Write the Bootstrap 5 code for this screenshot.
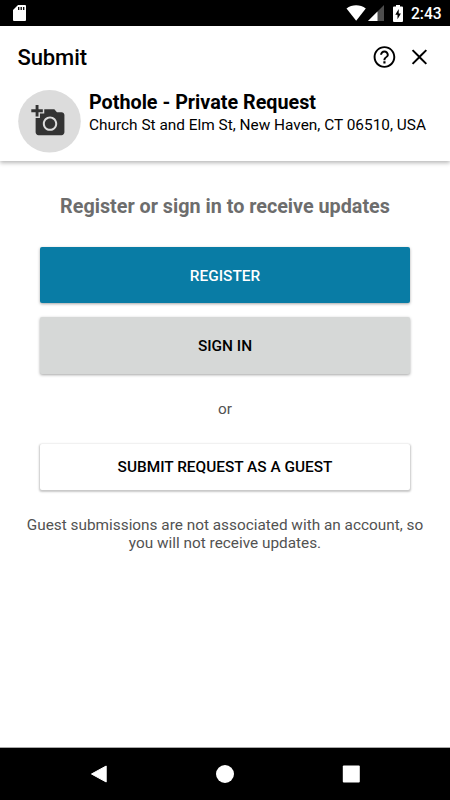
<!DOCTYPE html>
<html lang="en">
<head>
<meta charset="utf-8">
<meta name="viewport" content="width=device-width, initial-scale=1">
<title>Submit</title>
<link href="https://cdn.jsdelivr.net/npm/bootstrap@5.3.0/dist/css/bootstrap.min.css" rel="stylesheet">
<style>
body { font-family: Roboto, "Noto Sans", sans-serif; color: #000; }
svg { display: block; flex: none; }
.screen { width: 450px; height: 800px; }
.status-bar { height: 26px; padding: 0 9px 0 13px; }
.signal { margin-left: 2px; }
.battery { margin-left: 9px; }
.clock { font-size: 15.6px; line-height: 26px; font-weight: 500; width: 30px; margin-left: 8px; padding-top: 1px; white-space: nowrap; }
.app-header { height: 135px; padding: 18px 17px 0 17.5px; box-shadow: 0 2px 4px rgba(0,0,0,.28); }
.app-title { font-size: 22px; line-height: 26px; font-weight: 500; letter-spacing: -.1px; padding-top: 2px; }
.title-row { height: 26px; }
.close-icon { margin: 0 1px 0 9px; }
.photo-circle { width: 63px; height: 63px; background: #dcdcdc; padding: 14px 0 0 13px; flex: none; }
.request-row { margin-top: 19.5px; gap: 8.5px; }
.request-name { font-size: 19.75px; line-height: 24px; font-weight: 700; white-space: nowrap; padding-top: 1px; }
.request-address { font-size: 15.4px; line-height: 20px; white-space: nowrap; }
.content { padding: 33px 0 0; color: #525252; }
.prompt { font-size: 19.75px; line-height: 26px; font-weight: 700; color: #6d6d6d; white-space: nowrap; }
.action { width: 370px; border: 0; border-radius: 2px; padding: 0; font-size: 15.4px; font-weight: 500; line-height: 20px; box-shadow: 0 1px 3px rgba(0,0,0,.36); }
.action-register { --bs-btn-color: #fff; --bs-btn-bg: #097ca5; height: 56px; margin-top: 27px; padding-top: 2px; }
.action-signin { --bs-btn-color: #000; --bs-btn-bg: #d6d8d7; height: 57px; margin-top: 14px; }
.action-guest { --bs-btn-color: #000; --bs-btn-bg: #fff; height: 46px; margin-top: 25px; box-shadow: 0 1px 2px 1px rgba(0,0,0,.22); }
.or-label { font-size: 15.3px; line-height: 20px; margin-top: 25px; }
.note { font-size: 15.35px; line-height: 18px; margin-top: 26px; white-space: nowrap; }
.nav-buttons { height: 53px; border-top: 1px solid #a8a8a8; padding: 0 90px; }
</style>
</head>
<body class="bg-white">
<div class="screen d-flex flex-column overflow-hidden">
  <div class="status-bar bg-black text-white d-flex align-items-center">
    <svg width="13" height="16" viewBox="0 0 13 16"><path fill="#fff" d="M5 0h7a1 1 0 0 1 1 1v14a1 1 0 0 1-1 1H1a1 1 0 0 1-1-1V5z"/><path d="M5.700 2v3M8.200 2v3M10.700 2v3" stroke="#000" stroke-width="1.300"/></svg>
    <svg class="ms-auto" width="20" height="16" viewBox="0 0 20 16"><path fill="#fff" d="M.5 3.500C6-.9 14.200-.9 19.800 3.500L10.200 15.700z"/></svg>
    <svg class="signal" width="16" height="16" viewBox="0 0 16 16"><path fill="#4d4d4d" d="M16 0v16H0z"/><path fill="#fff" d="M9.500 6.500V16H0z"/></svg>
    <svg class="battery" width="10" height="17" viewBox="0 0 10 17"><path fill="#fff" d="M3 0h4v1.500h2a1 1 0 0 1 1 1V16a1 1 0 0 1-1 1H1a1 1 0 0 1-1-1V2.500a1 1 0 0 1 1-1h2z"/><path d="M5.700 4 2.300 9.800h2.200v4.400L7.900 8.400H5.700z"/></svg>
    <div class="clock">2:43</div>
  </div>
  <header class="app-header bg-white">
    <div class="title-row d-flex align-items-center">
      <div class="app-title me-auto">Submit</div>
      <svg width="26" height="26" viewBox="-.4 0 24 24"><path d="M11 18h2v-2h-2v2zm1-16C6.480 2 2 6.480 2 12s4.480 10 10 10 10-4.480 10-10S17.520 2 12 2zm0 18.200c-4.500 0-8.200-3.700-8.200-8.200s3.700-8.200 8.200-8.200 8.200 3.700 8.200 8.200-3.700 8.200-8.200 8.200zm0-14.200c-2.210 0-4 1.790-4 4h1.800c0-1.200 1-2.200 2.200-2.200s2.200 1 2.200 2.200c0 2-3.100 1.750-3.100 5h1.800c0-2.250 3.100-2.500 3.100-5 0-2.210-1.790-4-4-4z"/></svg>
      <svg class="close-icon" width="26" height="26" viewBox="-.4 0 24 24"><path d="M19 6.300 17.700 5 12 10.700 6.300 5 5 6.300 10.700 12 5 17.700 6.300 19 12 13.300 17.700 19 19 17.700 13.300 12z"/></svg>
    </div>
    <div class="request-row d-flex">
      <svg width="63" height="63" viewBox="0 0 63 63">
        <circle cx="31.500" cy="31.300" r="31.300" fill="#dcdcdc"/>
        <path transform="translate(13.300 13.500) scale(1.440)" fill="#333" d="M3 4V1h2v3h3v2H5v3H3V6H0V4h3zm3 6V7h3V4h7l1.830 2H21c1.100 0 2 .9 2 2v12c0 1.100-.9 2-2 2H5c-1.100 0-2-.9-2-2V10h3zm7 9c2.760 0 5-2.240 5-5s-2.240-5-5-5-5 2.240-5 5 2.240 5 5 5zm-3.600-5c0 1.990 1.610 3.600 3.600 3.600s3.600-1.610 3.600-3.600-1.610-3.600-3.600-3.600-3.600 1.610-3.600 3.600z"/>
      </svg>
      <div>
        <div class="request-name">Pothole - Private Request</div>
        <div class="request-address">Church St and Elm St, New Haven, CT 06510, USA</div>
      </div>
    </div>
  </header>
  <main class="content flex-grow-1 d-flex flex-column align-items-center text-center">
    <div class="prompt">Register or sign in to receive updates</div>
    <button type="button" class="btn action action-register">REGISTER</button>
    <button type="button" class="btn action action-signin">SIGN IN</button>
    <div class="or-label">or</div>
    <button type="button" class="btn action action-guest">SUBMIT REQUEST AS A GUEST</button>
    <div class="note">Guest submissions are not associated with an account, so<br>you will not receive updates.</div>
  </main>
  <nav class="nav-buttons bg-black d-flex align-items-center justify-content-between">
    <svg width="18" height="18" viewBox="0 0 18 18"><path fill="#fff" stroke="#fff" stroke-linejoin="round" d="M16.200 1v16L1.500 9z"/></svg>
    <svg width="18" height="18" viewBox="0 0 18 18"><circle cx="9" cy="9" r="9" fill="#fff"/></svg>
    <svg width="18" height="18" viewBox="0 0 18 18"><rect x=".8" y=".5" width="17" height="17" rx="1" fill="#fff"/></svg>
  </nav>
</div>
<script src="https://cdn.jsdelivr.net/npm/bootstrap@5.3.0/dist/js/bootstrap.bundle.min.js"></script>
</body>
</html>
